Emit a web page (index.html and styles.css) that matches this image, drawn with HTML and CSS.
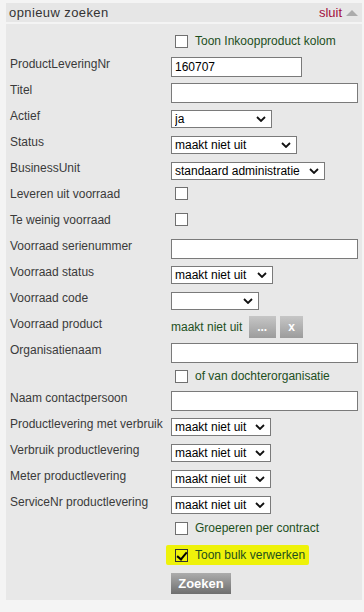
FILE: index.html
```html
<!DOCTYPE html>
<html lang="nl">
<head>
    <meta charset="UTF-8">
    <meta name="viewport" content="width=device-width, initial-scale=1.0">
    <title>Productlevering zoeken</title>
    <link rel="stylesheet" href="styles.css">
</head>
<body>
    <div class="panel">
        <div class="panel-head">
            <span class="panel-title">opnieuw zoeken</span>
            <a class="close" href="#">sluit <span class="arrow"></span></a>
        </div>
        <form class="panel-body">
            <table class="search">
                <tr class="first">
                    <td class="lbl"></td>
                    <td class="fld"><label class="check"><input type="checkbox"> Toon Inkoopproduct kolom</label></td>
                </tr>
                <tr>
                    <td class="lbl">ProductLeveringNr</td>
                    <td class="fld"><input type="text" class="txt short" value="160707"></td>
                </tr>
                <tr>
                    <td class="lbl">Titel</td>
                    <td class="fld"><input type="text" class="txt"></td>
                </tr>
                <tr>
                    <td class="lbl">Actief</td>
                    <td class="fld"><select class="sel w101"><option>ja</option></select></td>
                </tr>
                <tr>
                    <td class="lbl">Status</td>
                    <td class="fld"><select class="sel w126"><option>maakt niet uit</option></select></td>
                </tr>
                <tr>
                    <td class="lbl">BusinessUnit</td>
                    <td class="fld"><select class="sel w154"><option>standaard administratie</option></select></td>
                </tr>
                <tr>
                    <td class="lbl">Leveren uit voorraad</td>
                    <td class="fld"><label class="check"><input type="checkbox"></label></td>
                </tr>
                <tr>
                    <td class="lbl">Te weinig voorraad</td>
                    <td class="fld"><label class="check"><input type="checkbox"></label></td>
                </tr>
                <tr>
                    <td class="lbl">Voorraad serienummer</td>
                    <td class="fld"><input type="text" class="txt"></td>
                </tr>
                <tr>
                    <td class="lbl">Voorraad status</td>
                    <td class="fld"><select class="sel w102"><option>maakt niet uit</option></select></td>
                </tr>
                <tr>
                    <td class="lbl">Voorraad code</td>
                    <td class="fld"><select class="sel w88"><option></option></select></td>
                </tr>
                <tr>
                    <td class="lbl">Voorraad product</td>
                    <td class="fld picker">
                        <span class="green">maakt niet uit</span>
                        <button type="button" class="btn-small">...</button>
                        <button type="button" class="btn-small">x</button>
                    </td>
                </tr>
                <tr>
                    <td class="lbl">Organisatienaam</td>
                    <td class="fld"><input type="text" class="txt"></td>
                </tr>
                <tr class="tight">
                    <td class="lbl"></td>
                    <td class="fld"><label class="check"><input type="checkbox"> of van dochterorganisatie</label></td>
                </tr>
                <tr>
                    <td class="lbl">Naam contactpersoon</td>
                    <td class="fld"><input type="text" class="txt"></td>
                </tr>
                <tr>
                    <td class="lbl">Productlevering met verbruik</td>
                    <td class="fld"><select class="sel w100"><option>maakt niet uit</option></select></td>
                </tr>
                <tr>
                    <td class="lbl">Verbruik productlevering</td>
                    <td class="fld"><select class="sel w100"><option>maakt niet uit</option></select></td>
                </tr>
                <tr>
                    <td class="lbl">Meter productlevering</td>
                    <td class="fld"><select class="sel w100"><option>maakt niet uit</option></select></td>
                </tr>
                <tr>
                    <td class="lbl">ServiceNr productlevering</td>
                    <td class="fld"><select class="sel w100"><option>maakt niet uit</option></select></td>
                </tr>
                <tr>
                    <td class="lbl"></td>
                    <td class="fld"><label class="check"><input type="checkbox"> Groeperen per contract</label></td>
                </tr>
                <tr>
                    <td class="lbl"></td>
                    <td class="fld"><label class="check marker"><input type="checkbox" checked> Toon bulk verwerken</label></td>
                </tr>
                <tr>
                    <td class="lbl"></td>
                    <td class="fld"><button type="submit" class="btn-search">Zoeken</button></td>
                </tr>
            </table>
        </form>
    </div>
</body>
</html>
```

FILE: styles.css
```css
body {
    margin: 0;
    padding: 3px 2px 12px 6px;
    background: #f4f4f4;
    font-family: 'Liberation Sans', Arial, sans-serif;
    font-size: 12px;
    color: #333;
}

.panel {
    width: 356px;
}

.panel-head {
    height: 19px;
    background: #e6e6e6;
    display: flex;
    justify-content: space-between;
    align-items: center;
    padding: 0 4px 0 3px;
    margin-bottom: 2px;
    font-size: 13px;
}

.panel-title {
    color: #333;
    letter-spacing: 0.4px;
}

.close {
    color: #a3103e;
    text-decoration: none;
    display: flex;
    align-items: center;
    gap: 4px;
}

.arrow {
    width: 0;
    height: 0;
    border-left: 6px solid transparent;
    border-right: 6px solid transparent;
    border-bottom: 6px solid #ababab;
}

.panel-body {
    background: #e8e8e8;
    padding: 7px 0 4px 0;
    margin: 0;
}

.search {
    border-collapse: collapse;
    width: 100%;
    table-layout: fixed;
}

.search tr {
    height: 26px;
}

.search tr.first {
    height: 23px;
}

.search tr.tight {
    height: 22px;
}

.search td {
    padding: 0;
    vertical-align: top;
}

.search td.lbl {
    width: 165px;
    box-sizing: border-box;
    padding: 3px 0 0 4px;
    white-space: nowrap;
    color: #3a3a3a;
}

.txt {
    box-sizing: border-box;
    width: 187px;
    height: 20px;
    margin: 3px 0 0 0;
    padding: 0 3px;
    border: 1px solid #7a7a7a;
    background: #fff;
    font-family: inherit;
    font-size: 12px;
    color: #000;
}

.txt.short {
    width: 131px;
}

.sel {
    appearance: none;
    -webkit-appearance: none;
    box-sizing: border-box;
    height: 18px;
    margin: 4px 0 0 0;
    padding: 0 16px 0 3px;
    border: 1px solid #7a7a7a;
    border-radius: 0;
    background: #fff url("data:image/svg+xml,%3Csvg xmlns='http://www.w3.org/2000/svg' width='10' height='6'%3E%3Cpath d='M1 1l4 4 4-4' fill='none' stroke='%23111' stroke-width='1.8'/%3E%3C/svg%3E") no-repeat right 5px center;
    font-family: inherit;
    font-size: 12px;
    color: #000;
}

.w88 { width: 88px; }
.w100 { width: 100px; }
.w101 { width: 101px; }
.w102 { width: 102px; }
.w126 { width: 126px; }
.w154 { width: 154px; }

.check {
    display: inline-flex;
    align-items: center;
    margin-top: 3px;
    color: #1d4f1d;
    font-size: 12px;
}

.check input {
    appearance: none;
    -webkit-appearance: none;
    width: 13px;
    height: 13px;
    margin: 0 7px 0 4px;
    border: 1px solid #707070;
    background: #fff;
    position: relative;
}

.check input:checked {
    background: transparent;
    border-color: #333;
}

.check input:checked::after {
    content: "";
    position: absolute;
    left: 3px;
    top: 0;
    width: 4px;
    height: 8px;
    border-right: 2px solid #000;
    border-bottom: 2px solid #000;
    transform: rotate(40deg);
}

.marker {
    background: #eef20a;
    padding: 3px 4px 3px 5px;
    margin: 1px 0 0 -5px;
    border-radius: 2px;
}

.green {
    color: #1d4f1d;
    font-size: 12px;
}

.picker {
    padding-top: 2px !important;
}

.picker .green {
    display: inline-block;
    vertical-align: middle;
    margin-right: 2px;
}

.btn-small {
    width: 27px;
    height: 22px;
    border: none;
    margin-left: 1px;
    padding: 0;
    vertical-align: middle;
    background: linear-gradient(to bottom, #c6c6c6, #9c9c9c);
    color: #fff;
    font-family: inherit;
    font-weight: bold;
    font-size: 12px;
}

.btn-small + .btn-small {
    width: 23px;
}

.btn-search {
    width: 60px;
    height: 21px;
    margin-top: 3px;
    border: none;
    padding: 0;
    background: linear-gradient(to bottom, #acacac, #6e6e6e);
    color: #fff;
    font-family: inherit;
    font-weight: bold;
    font-size: 13px;
}
```
